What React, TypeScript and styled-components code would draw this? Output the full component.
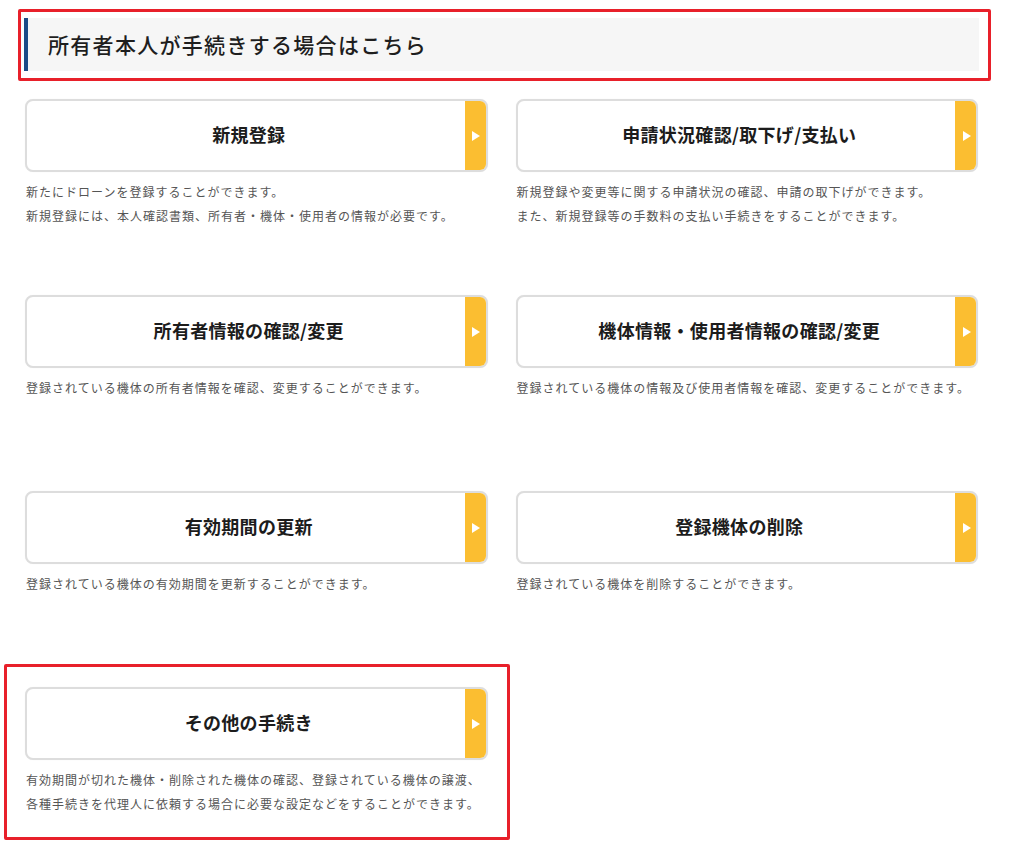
import React from "react";
import styled, { createGlobalStyle } from "styled-components";

const GlobalStyle = createGlobalStyle`
  html, body {
    margin: 0;
    padding: 0;
    background: #ffffff;
  }
  body {
    font-family: "Noto Sans CJK JP", "Noto Sans", sans-serif;
    color: #222;
  }
`;

const Page = styled.div`
  width: 955px;
  padding: 18px 0 40px 24px;
`;

const Heading = styled.h2`
  position: relative;
  margin: 0;
  height: 53px;
  box-sizing: border-box;
  display: flex;
  align-items: center;
  background: #f6f6f6;
  border-left: 4px solid #1d4b86;
  padding-left: 20px;
  padding-bottom: 1px;
  font-size: 21px;
  font-weight: 500;
  letter-spacing: 1.3px;
  color: #1e1e1e;
  &::after {
    content: "";
    position: absolute;
    top: -9px;
    left: -10px;
    right: -12px;
    bottom: -10px;
    border: 3px solid #e8202a;
    border-radius: 2px;
    pointer-events: none;
  }
`;

const Grid = styled.div`
  display: grid;
  grid-template-columns: 1fr 1fr;
  column-gap: 28px;
  row-gap: 67px;
  margin-top: 28px;
  padding: 0 1px;
`;

const Item = styled.div<{ $highlight?: boolean }>`
  position: relative;
  ${(p) =>
    p.$highlight &&
    `
    &::after {
      content: "";
      position: absolute;
      top: -23px;
      left: -21px;
      right: -22px;
      bottom: -24px;
      border: 3px solid #e8202a;
      border-radius: 2px;
      pointer-events: none;
    }
  `}
`;

const Card = styled.a`
  display: flex;
  align-items: stretch;
  height: 73px;
  box-sizing: border-box;
  border: 2px solid #dddddd;
  border-radius: 8px;
  background: #fff;
  box-shadow: 0 0 1px rgba(0, 0, 0, 0.08);
  overflow: hidden;
  text-decoration: none;
  cursor: pointer;
`;

const CardLabel = styled.span`
  flex: 1;
  display: flex;
  align-items: center;
  justify-content: center;
  padding-left: 6px;
  padding-bottom: 3px;
  font-size: 18px;
  font-weight: 700;
  letter-spacing: 0.3px;
  color: #1c1c1c;
`;

const Strip = styled.span`
  width: 21px;
  background: #fbbe31;
  display: flex;
  align-items: center;
  justify-content: center;
`;

const Arrow = styled.span`
  width: 0;
  height: 0;
  border-top: 5px solid transparent;
  border-bottom: 5px solid transparent;
  border-left: 8px solid #ffffff;
  margin-left: 2px;
`;

const Desc = styled.p`
  margin: 8px 0 0 1px;
  min-height: 48px;
  font-size: 12px;
  line-height: 24px;
  letter-spacing: 1px;
  color: #555555;
  font-weight: 400;
`;

type Entry = { title: string; lines: string[]; highlight?: boolean };

const entries: Entry[] = [
  {
    title: "新規登録",
    lines: [
      "新たにドローンを登録することができます。",
      "新規登録には、本人確認書類、所有者・機体・使用者の情報が必要です。",
    ],
  },
  {
    title: "申請状況確認/取下げ/支払い",
    lines: [
      "新規登録や変更等に関する申請状況の確認、申請の取下げができます。",
      "また、新規登録等の手数料の支払い手続きをすることができます。",
    ],
  },
  {
    title: "所有者情報の確認/変更",
    lines: ["登録されている機体の所有者情報を確認、変更することができます。"],
  },
  {
    title: "機体情報・使用者情報の確認/変更",
    lines: ["登録されている機体の情報及び使用者情報を確認、変更することができます。"],
  },
  {
    title: "有効期間の更新",
    lines: ["登録されている機体の有効期間を更新することができます。"],
  },
  {
    title: "登録機体の削除",
    lines: ["登録されている機体を削除することができます。"],
  },
  {
    title: "その他の手続き",
    lines: [
      "有効期間が切れた機体・削除された機体の確認、登録されている機体の譲渡、",
      "各種手続きを代理人に依頼する場合に必要な設定などをすることができます。",
    ],
    highlight: true,
  },
];

export default function App() {
  return (
    <>
      <GlobalStyle />
      <Page>
        <Heading>所有者本人が手続きする場合はこちら</Heading>
        <Grid>
          {entries.map((e) => (
            <Item key={e.title} $highlight={e.highlight}>
              <Card>
                <CardLabel>{e.title}</CardLabel>
                <Strip>
                  <Arrow />
                </Strip>
              </Card>
              <Desc>
                {e.lines.map((l, i) => (
                  <React.Fragment key={i}>
                    {l}
                    {i < e.lines.length - 1 && <br />}
                  </React.Fragment>
                ))}
              </Desc>
            </Item>
          ))}
        </Grid>
      </Page>
    </>
  );
}
